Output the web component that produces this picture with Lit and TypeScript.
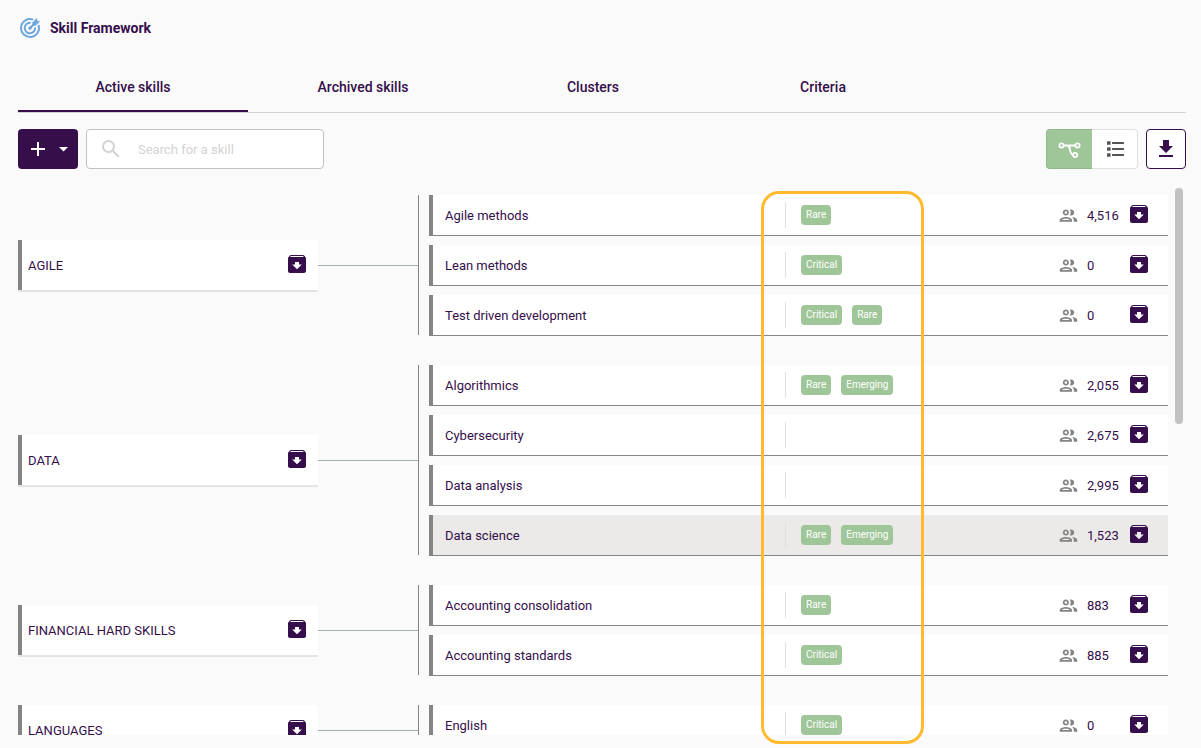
import { LitElement, html, css, svg } from "lit";
import { customElement, property, state } from "lit/decorators.js";
import { classMap } from "lit/directives/class-map.js";

interface Skill {
  name: string;
  tags: string[];
  people: string;
  active?: boolean;
}

interface Category {
  name: string;
  skills: Skill[];
}

const CATEGORIES: Category[] = [
  {
    name: "AGILE",
    skills: [
      { name: "Agile methods", tags: ["Rare"], people: "4,516" },
      { name: "Lean methods", tags: ["Critical"], people: "0" },
      { name: "Test driven development", tags: ["Critical", "Rare"], people: "0" },
    ],
  },
  {
    name: "DATA",
    skills: [
      { name: "Algorithmics", tags: ["Rare", "Emerging"], people: "2,055" },
      { name: "Cybersecurity", tags: [], people: "2,675" },
      { name: "Data analysis", tags: [], people: "2,995" },
      { name: "Data science", tags: ["Rare", "Emerging"], people: "1,523", active: true },
    ],
  },
  {
    name: "FINANCIAL HARD SKILLS",
    skills: [
      { name: "Accounting consolidation", tags: ["Rare"], people: "883" },
      { name: "Accounting standards", tags: ["Critical"], people: "885" },
    ],
  },
  {
    name: "LANGUAGES",
    skills: [{ name: "English", tags: ["Critical"], people: "0" }],
  },
];

const TABS = ["Active skills", "Archived skills", "Clusters", "Criteria"];

const archiveIcon = html`<svg width="18" height="18" viewBox="3 3 18 18" aria-hidden="true">
  <path fill="currentColor" d="M20.54 5.23l-1.39-1.68C18.88 3.21 18.47 3 18 3H6c-.47 0-.88.21-1.16.55L3.46 5.23C3.17 5.57 3 6.02 3 6.5V19c0 1.1.9 2 2 2h14c1.1 0 2-.9 2-2V6.5c0-.48-.17-.93-.46-1.27zM12 17.2L7.2 12.600H10V10h4v2.600h2.800L12 17.2zM5.12 5l.81-1h12l.94 1H5.12z"/>
</svg>`;

const peopleIcon = html`<svg class="people" width="21" height="21" viewBox="0 0 24 24" aria-hidden="true">
  <path fill="currentColor" d="M9 13.75c-2.34 0-7 1.17-7 3.5V19h14v-1.75c0-2.33-4.66-3.5-7-3.5zM4.34 17c.84-.58 2.87-1.25 4.66-1.25s3.82.67 4.66 1.25H4.34zM9 12c1.93 0 3.5-1.57 3.5-3.5S10.93 5 9 5 5.5 6.57 5.5 8.5 7.07 12 9 12zm0-5c.83 0 1.5.67 1.5 1.5S9.83 10 9 10s-1.5-.67-1.5-1.5S8.17 7 9 7zm7.04 6.81c1.16.84 1.96 1.96 1.96 3.44V19h4v-1.75c0-2.02-3.5-3.17-5.96-3.44zM15 12c1.93 0 3.5-1.57 3.5-3.5S16.93 5 15 5c-.54 0-1.04.13-1.5.35.63.89 1 1.98 1 3.15s-.37 2.26-1 3.15c.46.22.96.35 1.5.35z"/>
</svg>`;

const bullets = [3, 9, 15].map(
  (y) => svg`<rect x="2" y=${y - 0.8} width="3.600" height="3.600" rx="0.5"/><rect x="7" y=${y} width="12" height="2" rx="0.5"/>`
);

@customElement("skill-row")
class SkillRow extends LitElement {
  @property({ attribute: false }) skill!: Skill;

  static styles = css`
    :host { display: block; }
    .row {
      display: grid;
      grid-template-columns: minmax(0, 1fr) 275px 108px;
      align-items: center;
      height: 40px;
      box-sizing: border-box;
      padding-left: 12px;
      border-left: 4px solid #848484;
      background: #fff;
      box-shadow: 0 1px 0 #848484;
    }
    .row.active { background: #ebeae8; }
    .name { padding-top: 2px; overflow: hidden; text-overflow: ellipsis; white-space: nowrap; }
    .tags {
      display: flex;
      align-items: center;
      gap: 10px;
      height: 26px;
      padding-left: 15px;
      border-left: 1px solid #e0e0e0;
      box-sizing: border-box;
    }
    .tag {
      padding: 0 5px;
      border-radius: 4px;
      background: #9fc699;
      color: #fff;
      font-size: 10px;
      line-height: 20px;
    }
    .end { display: flex; align-items: center; }
    .people { flex: none; color: #848484; margin-left: -2px; }
    .count { flex: 1; padding: 2px 0 0 8px; }
    .archive {
      display: flex;
      margin-right: 20px;
      padding: 0 0 2px;
      border: 0;
      background: none;
      color: #350e4b;
      cursor: pointer;
    }
  `;

  render() {
    const s = this.skill;
    return html`
      <div class=${classMap({ row: true, active: !!s.active })}>
        <span class="name">${s.name}</span>
        <div class="tags">${s.tags.map((t) => html`<span class="tag">${t}</span>`)}</div>
        <div class="end">
          ${peopleIcon}<span class="count">${s.people}</span>
          <button class="archive" aria-label="Archive ${s.name}">${archiveIcon}</button>
        </div>
      </div>
    `;
  }
}

@customElement("app-root")
class AppRoot extends LitElement {
  @state() private tab = 0;

  static styles = css`
    :host {
      display: flex;
      flex-direction: column;
      position: relative;
      box-sizing: border-box;
      height: 100vh;
      padding: 16px 15px 13px 18px;
      background: #fafafa;
      color: #350e4b;
      font-family: Roboto, "Liberation Sans", sans-serif;
      font-size: 13px;
      line-height: 20px;
    }
    button, input { font: inherit; color: inherit; }
    button { cursor: pointer; }
    .title { display: flex; align-items: center; gap: 8px; height: 24px; }
    h1 { margin: 0; font-size: 14px; font-weight: 700; line-height: 24px; }
    .tabs { display: flex; margin-top: 22px; border-bottom: 1px solid #d3d3d3; }
    .tab {
      width: 230px;
      height: 50px;
      padding: 2px 0 0;
      border: 0;
      border-bottom: 2px solid transparent;
      background: none;
      font-size: 14px;
      font-weight: 500;
    }
    .tab.selected { border-color: #350e4b; }
    .toolbar { display: flex; gap: 8px; margin-top: 16px; }
    .toolbar button { display: flex; align-items: center; justify-content: center; height: 40px; box-sizing: border-box; }
    .add { width: 60px; padding: 0; border: 0; border-radius: 4px; background: #350e4b; }
    .search {
      display: flex;
      align-items: center;
      box-sizing: border-box;
      width: 238px;
      height: 40px;
      padding: 0 12px;
      gap: 15px;
      border: 1px solid #c1c1c1;
      border-radius: 4px;
      background: #fff;
      color: #d3d3d3;
    }
    .search svg { flex: none; }
    .search input { flex: 1; min-width: 0; padding: 2px 0 0; border: 0; outline: 0; background: none; color: #350e4b; }
    .search input::placeholder { color: #d3d3d3; opacity: 1; }
    .views { display: flex; margin-left: auto; }
    .view { width: 46px; padding: 0; border: 1px solid #e0e0e0; border-left: 0; border-radius: 0 4px 4px 0; background: #fff; }
    .view.on { border: 1px solid #8fb98a; border-right: 0; border-radius: 4px 0 0 4px; background: #9fc699; }
    .download { width: 40px; padding: 0; border: 1px solid #350e4b; border-radius: 4px; background: #fff; }
    .board { display: flex; flex: 1; min-height: 0; gap: 7px; margin-top: 19px; padding-right: 3px; }
    .scroll { flex: 1; min-width: 0; overflow: auto; scrollbar-width: none; padding-top: 7px; }
    .scroll::-webkit-scrollbar { display: none; }
    .bar { width: 8px; }
    .thumb { height: 236px; border-radius: 4px; background: #c1c1c1; }
    .group {
      display: grid;
      grid-template-columns: 300px 100px minmax(0, 1fr);
      align-items: center;
      margin-bottom: 30px;
    }
    .category {
      display: flex;
      align-items: center;
      justify-content: space-between;
      box-sizing: border-box;
      height: 50px;
      padding: 0 12px 0 6px;
      border-left: 4px solid #848484;
      background: #fff;
      box-shadow: 0 2px 0 #e4e4e4;
    }
    .category span { padding-top: 2px; }
    .category button { display: flex; padding: 0 0 2px; border: 0; background: none; }
    .link { align-self: center; border-top: 1px solid #9db0a9; }
    .skills {
      display: flex;
      flex-direction: column;
      align-self: stretch;
      gap: 10px;
      padding-left: 10px;
      border-left: 1px solid #848484;
    }
    .highlight {
      position: absolute;
      top: 191px;
      right: 277px;
      bottom: 4px;
      width: 163px;
      box-sizing: border-box;
      border: 3px solid #ffba2e;
      border-radius: 18px;
      pointer-events: none;
    }
  `;

  render() {
    return html`
      <header class="title">
        <svg width="24" height="24" viewBox="0 0 24 24" fill="none" stroke="#6fa8dc" aria-hidden="true">
          <path stroke-width="2" d="M15.200 3.600a9 9 0 1 0 5.300 5.400"/>
          <path stroke-width="2" d="M12.600 6.900a5.200 5.200 0 1 0 4.500 4.600"/>
          <path stroke-width="2" stroke-linecap="round" d="M12 12.100L17 7"/>
          <circle cx="12" cy="12.100" r="1.300" fill="#6fa8dc"/>
          <path fill="#6fa8dc" stroke="none" d="M14.300 9.700V6.400L18.800 2l.5 2.700 2.800.5-4.500 4.500z"/>
        </svg>
        <h1>Skill Framework</h1>
      </header>

      <nav class="tabs" role="tablist">
        ${TABS.map(
          (t, i) => html`<button
            role="tab"
            aria-selected=${i === this.tab}
            class=${classMap({ tab: true, selected: i === this.tab })}
            @click=${() => (this.tab = i)}
          >${t}</button>`
        )}
      </nav>

      <div class="toolbar">
        <button class="add" aria-label="Add">
          <svg width="60" height="40" viewBox="0 0 60 40" fill="#fff" aria-hidden="true">
            <path d="M19 13h2v6h6v2h-6v6h-2v-6h-6v-2h6z"/>
            <path d="M41 18h9l-4.500 4.500z"/>
          </svg>
        </button>
        <label class="search">
          <svg width="24" height="24" viewBox="0 0 24 24" aria-hidden="true">
            <path fill="currentColor" d="M15.500 14h-.79l-.28-.27A6.471 6.471 0 0 0 16 9.500 6.500 6.500 0 1 0 9.500 16c1.610 0 3.090-.59 4.230-1.570l.27.28v.79l5 4.990L20.490 19l-4.990-5zm-6 0C7.010 14 5 11.990 5 9.500S7.010 5 9.500 5 14 7.010 14 9.500 11.990 14 9.500 14z"/>
          </svg>
          <input type="search" placeholder="Search for a skill" aria-label="Search for a skill" />
        </label>
        <div class="views">
          <button class="view on" aria-label="Tree view">
            <svg width="24" height="24" viewBox="0 0 24 24" fill="none" stroke="#fff" stroke-width="1.800" aria-hidden="true">
              <circle cx="3.500" cy="8.500" r="2.100"/>
              <circle cx="19.500" cy="8.500" r="2.100"/>
              <circle cx="17.200" cy="18" r="2.100"/>
              <path d="M5.600 8.500h11.800M8.500 8.500c3.600 0 3.200 3.800 4 6.200.5 1.800 1.300 2.800 2.600 3.100"/>
            </svg>
          </button>
          <button class="view" aria-label="List view">
            <svg width="20" height="20" viewBox="0 0 20 20" fill="#555" aria-hidden="true">${bullets}</svg>
          </button>
        </div>
        <button class="download" aria-label="Download">
          <svg width="24" height="24" viewBox="0 0 24 24" aria-hidden="true">
            <path fill="currentColor" d="M19 9h-4V3H9v6H5l7 7 7-7zM5 18v2h14v-2H5z"/>
          </svg>
        </button>
      </div>

      <main class="board">
        <div class="scroll">
          ${CATEGORIES.map(
            (c) => html`<section class="group">
              <div class="category">
                <span>${c.name}</span>
                <button aria-label="Archive ${c.name}">${archiveIcon}</button>
              </div>
              <div class="link"></div>
              <div class="skills">
                ${c.skills.map((s) => html`<skill-row .skill=${s}></skill-row>`)}
              </div>
            </section>`
          )}
        </div>
        <div class="bar"><div class="thumb"></div></div>
      </main>
      <div class="highlight"></div>
    `;
  }
}
